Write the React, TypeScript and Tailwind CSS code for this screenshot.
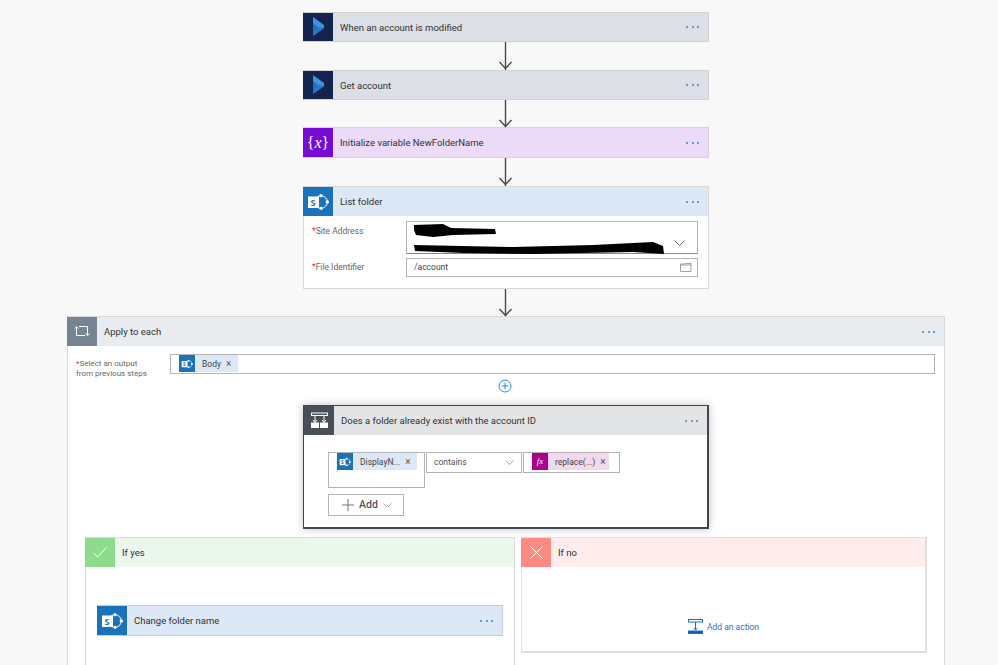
import React from "react";

const font = { fontFamily: 'Roboto, "Open Sans", sans-serif' };

const Dynamics = () => (
  <svg viewBox="0 0 30 30" className="w-[30px] h-[30px]">
    <path d="M10 5 L21 13 V16 L10 24 Z" fill="#3a96dd" />
    <path d="M10 11 L15 15 L10 24 Z" fill="#2a6fb0" />
    <path d="M10 24 L15 15 L21 16 Z" fill="#2578c4" />
  </svg>
);

const SharePoint = ({ size = 30 }: { size?: number }) => (
  <svg viewBox="0 0 30 30" width={size} height={size}>
    <circle cx="18" cy="15" r="6.3" fill="none" stroke="#fff" strokeWidth="1" />
    <circle cx="18" cy="8.7" r="1.6" fill="#fff" />
    <circle cx="24.3" cy="15" r="1.7" fill="#fff" />
    <circle cx="18" cy="21.3" r="1.6" fill="#fff" />
    <rect x="5" y="9.5" width="11" height="11.5" fill="#fff" />
    <text x="7.6" y="18.6" fontSize="9" fontWeight="700" fill="#1a72ba" fontFamily="Open Sans, sans-serif">S</text>
  </svg>
);

const Dots = () => (
  <div className="flex gap-[3.5px] mr-[9px] shrink-0">
    <span className="w-[2px] h-[2px] rounded-full bg-[#2b88d8]" />
    <span className="w-[2px] h-[2px] rounded-full bg-[#2b88d8]" />
    <span className="w-[2px] h-[2px] rounded-full bg-[#2b88d8]" />
  </div>
);

const Head = ({ icon, iconBg, bg, title, dots = true, h = "h-[28px]" }: { icon: React.ReactNode; iconBg: string; bg: string; title: string; dots?: boolean; h?: string }) => (
  <div className={`flex items-center ${h} ${bg}`}>
    <div className={`w-[30px] h-full shrink-0 flex items-center justify-center overflow-hidden ${iconBg}`}>{icon}</div>
    <span className="flex-1 ml-[7px] pt-[2px] text-[9.5px] text-[#323130]">{title}</span>
    {dots && <Dots />}
  </div>
);

const Arrow = ({ h }: { h: string }) => (
  <div className={`flex justify-center -ml-[1px] ${h}`}>
    <svg width="15" height="100%" className="overflow-visible">
      <line x1="7.5" y1="0" x2="7.5" y2="100%" stroke="#4a4a4a" strokeWidth="1.4" />
      <path d="M1.5 20 L7.5 26.5 L13.5 20" fill="none" stroke="#4a4a4a" strokeWidth="1.4" />
    </svg>
  </div>
);

const Chevron = ({ color = "#555", w = 11 }: { color?: string; w?: number }) => (
  <svg width={w} height={(w * 6) / 11} viewBox="0 0 11 6" fill="none" stroke={color} strokeWidth="0.9">
    <path d="M0.5 0.5 L5.5 5.5 L10.5 0.5" />
  </svg>
);

const Token = ({ icon, iconBg, bg, label, w }: { icon: React.ReactNode; iconBg: string; bg: string; label: string; w: string }) => (
  <div className={`flex items-center h-[17px] ${bg} ${w}`}>
    <div className={`w-[16px] h-[17px] shrink-0 flex items-center justify-center ${iconBg}`}>{icon}</div>
    <span className="ml-[7px] pt-[1px] text-[8.5px] text-[#444]">{label}</span>
    <span className="ml-[5px] text-[10px] leading-none text-[#555]">×</span>
  </div>
);

const ApplyIcon = () => (
  <svg width="16" height="13" viewBox="0 0 16 13" fill="none" stroke="#fff" strokeWidth="1">
    <path d="M2.5 2 V10.5 H11" />
    <path d="M5 1.5 H13.5 V10" />
    <path d="M0.8 3.5 L2.5 1.5 L4.5 3.5" />
    <path d="M11.5 8.5 L13.5 10.8 L15.5 8.5" />
  </svg>
);

const ConditionIcon = () => (
  <svg width="17" height="17" viewBox="0 0 17 17" fill="none" stroke="#fff" strokeWidth="1">
    <rect x="0.5" y="1" width="16" height="2.5" />
    <path d="M4 3.5 V10 M13 3.5 V10 M2 8 L4 10.5 L6 8 M11 8 L13 10.5 L15 8" />
    <rect x="0.5" y="11" width="7" height="4.5" fill="#fff" />
    <rect x="9.5" y="11" width="7" height="4.5" fill="#fff" />
  </svg>
);

export default function App() {
  return (
    <div className="h-[665px] overflow-hidden bg-[#f8f8f8] pt-3" style={font}>
      {/* top flow */}
      <div className="ml-[303px] w-[406px]">
        <div className="border-y border-r border-[#d0d2d6]">
          <Head icon={<Dynamics />} iconBg="bg-[#15234f]" bg="bg-[#dcdfe6]" title="When an account is modified" />
        </div>
        <Arrow h="h-[28px]" />
        <div className="border-y border-r border-[#d0d2d6]">
          <Head icon={<Dynamics />} iconBg="bg-[#15234f]" bg="bg-[#dcdfe6]" title="Get account" />
        </div>
        <Arrow h="h-[27px]" />
        <div className="border-y border-r border-[#d8cfe2]">
          <Head
            h="h-[29px]"
            icon={<span className="text-[16px] text-white leading-none" style={{ fontFamily: '"Liberation Serif", serif' }}>{"{"}<i>x</i>{"}"}</span>}
            iconBg="bg-[#770bd6]"
            bg="bg-[#ebdbf8]"
            title="Initialize variable NewFolderName"
          />
        </div>
        <Arrow h="h-[28px]" />
        <div className="border-y border-r border-l border-[#d8d8d8] bg-white h-[103px]">
          <div className="-ml-px">
            <Head h="h-[29px]" icon={<SharePoint />} iconBg="bg-[#1a72ba]" bg="bg-[#dce8f5]" title="List folder" />
          </div>
          <div className="pl-[8px] pr-[10px] pt-[5px]">
            <div className="flex">
              <div className="w-[94px] pt-[4px] text-[8.5px] text-[#666]"><span className="text-[#d13438]">*</span>Site Address</div>
              <div className="relative w-[292px] h-[33px] border border-[#b4b4b4] border-b-[#8a8a8a]">
                <svg width="258" height="33" viewBox="0 0 258 33" className="absolute left-[6px] top-0">
                  <path d="M1 3 L30 2 L38 6 L82 7 L83 12 L40 13 L20 15 L3 13 L1 8 Z" fill="#000" />
                  <path d="M1 23 L100 25 L180 23 L240 20 L250 24 L251 32 L220 30 L120 32 L50 31 L2 29 Z" fill="#000" />
                </svg>
                <div className="absolute right-[12px] bottom-[7px]"><Chevron /></div>
              </div>
            </div>
            <div className="flex mt-[4px]">
              <div className="w-[94px] pt-[3px] text-[8.5px] text-[#666]"><span className="text-[#d13438]">*</span>File Identifier</div>
              <div className="flex items-center justify-between w-[292px] h-[19px] border border-[#b4b4b4] pl-[7px] pr-[5px] text-[8.5px] text-[#444]">
                /account
                <svg width="12" height="9" viewBox="0 0 12 9" fill="none" stroke="#8a8a8a" strokeWidth="0.8">
                  <path d="M0.5 2 H11 V8.5 H0.5 Z M0.5 2 V1 H5 L6 0.5 H11 V2" />
                </svg>
              </div>
            </div>
          </div>
        </div>
        <Arrow h="h-[27px]" />
      </div>

      {/* apply to each */}
      <div className="ml-[67px] w-[878px] h-[400px] border-y border-r border-l border-[#d8d8d8] bg-white">
        <div className="-ml-px">
          <Head h="h-[29px]" icon={<ApplyIcon />} iconBg="bg-[#768393]" bg="bg-[#e9ecef]" title="Apply to each" />
        </div>
        <div className="flex items-start pl-[8px] pr-[9px] pt-[8px]">
          <div className="w-[94px] h-[20px] pt-[5px] text-[8px] leading-[10px] text-[#666]">
            <span className="text-[#d13438]">*</span>Select an output<br />from previous steps
          </div>
          <div className="flex-1 h-[20px] border border-[#b4b4b4] pl-[8px]">
            <Token icon={<SharePoint size={16} />} iconBg="bg-[#1a72ba]" bg="bg-[#dce8f5]" label="Body" w="w-[59px]" />
          </div>
        </div>
        <div className="flex justify-center mt-[5px] -ml-[2px]">
          <svg width="14" height="14" viewBox="0 0 14 14" fill="none" stroke="#2b88d8" strokeWidth="1">
            <circle cx="7" cy="7" r="6" />
            <path d="M3.5 7 H10.5 M7 3.5 V10.5" />
          </svg>
        </div>

        {/* condition */}
        <div className="ml-[235px] mt-[12px] w-[406px] h-[124px] bg-white border border-r-2 border-b-2 border-[#3f4750] shadow-[0_0_8px_rgba(0,0,0,0.25)]">
          <Head h="h-[29px]" icon={<ConditionIcon />} iconBg="bg-[#484f58]" bg="bg-[#e3e4e6]" title="Does a folder already exist with the account ID" />
          <div className="pl-[24px] pt-[17px]">
            <div className="flex items-start gap-px">
              <div className="w-[97px] h-[36px] border border-[#b4b4b4] pl-[8px]">
                <Token icon={<SharePoint size={16} />} iconBg="bg-[#1a72ba]" bg="bg-[#dce8f5]" label="DisplayN..." w="w-[80px]" />
              </div>
              <div className="flex items-center justify-between w-[96px] h-[21px] border border-[#b4b4b4] pl-[7px] pr-[7px] text-[8.5px] text-[#555]">
                contains
                <Chevron color="#888" w={9} />
              </div>
              <div className="w-[97px] h-[21px] border border-[#b4b4b4] pl-[8px]">
                <Token
                  icon={<span className="text-[9px] italic text-white" style={{ fontFamily: '"Liberation Serif", serif' }}>fx</span>}
                  iconBg="bg-[#ad008c]"
                  bg="bg-[#f3d8ee]"
                  label="replace(...)"
                  w="w-[77px]"
                />
              </div>
            </div>
            <div className="flex items-center w-[76px] h-[22px] mt-[6px] border border-[#b4b4b4]">
              <svg width="12" height="12" viewBox="0 0 12 12" stroke="#666" strokeWidth="0.9" className="ml-[13px]">
                <path d="M6 0 V12 M0 6 H12" />
              </svg>
              <span className="ml-[5px] text-[10.5px] font-medium text-[#555]">Add</span>
              <span className="ml-[5px]"><Chevron color="#888" w={9} /></span>
            </div>
          </div>
        </div>

        {/* branches */}
        <div className="flex items-start gap-[6px] ml-[17px] mt-[8px]">
          <div className="w-[430px] h-[200px] border border-[#dcdcdc] bg-white">
            <div className="-ml-px">
              <Head
                h="h-[29px]"
                icon={<svg width="14" height="11" viewBox="0 0 14 11" fill="none" stroke="#fff" strokeWidth="1"><path d="M0.5 6 L4.5 10 L13.5 0.5" /></svg>}
                iconBg="bg-[#8cdc8c]"
                bg="bg-[#ebf7ed]"
                title="If yes"
                dots={false}
              />
            </div>
            <div className="ml-[11px] mt-[38px] w-[406px] border-y border-r border-[#c8ced6]">
              <Head h="h-[29px]" icon={<SharePoint />} iconBg="bg-[#1a72ba]" bg="bg-[#dce8f5]" title="Change folder name" />
            </div>
          </div>
          <div className="w-[406px] h-[116px] border border-r-2 border-b-2 border-[#e0e0e0] bg-white">
            <div className="-ml-px">
              <Head
                h="h-[29px]"
                icon={<svg width="13" height="13" viewBox="0 0 13 13" fill="none" stroke="#fff" strokeWidth="1"><path d="M0.5 0.5 L12.5 12.5 M12.5 0.5 L0.5 12.5" /></svg>}
                iconBg="bg-[#ff8a82]"
                bg="bg-[#ffecec]"
                title="If no"
                dots={false}
              />
            </div>
            <div className="flex items-center justify-center mt-[52px]">
              <svg width="15" height="15" viewBox="0 0 15 15" fill="none" stroke="#1a6fc0" strokeWidth="1">
                <rect x="0.5" y="0.5" width="14" height="2.5" />
                <path d="M7.5 3 V11 M5.5 9 L7.5 11 L9.5 9" />
                <rect x="0.5" y="12" width="14" height="2.5" fill="#0f5fb0" />
              </svg>
              <span className="ml-[4px] pt-[1px] text-[8.5px] text-[#2b6fd0]">Add an action</span>
            </div>
          </div>
        </div>
      </div>
    </div>
  );
}
